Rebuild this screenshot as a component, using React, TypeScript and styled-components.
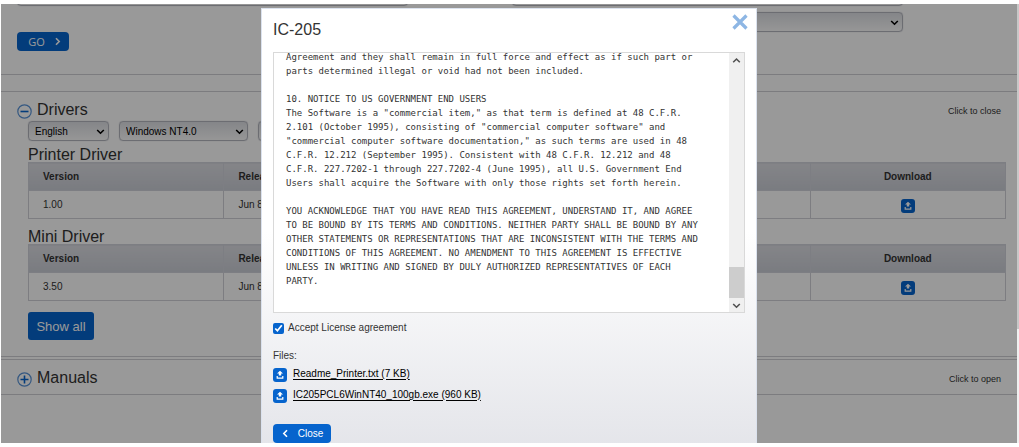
import React from "react";
import styled, { createGlobalStyle } from "styled-components";

const GlobalStyle = createGlobalStyle`
  * { box-sizing: border-box; }
  html { background: #fff; }
  body {
    margin: 0;
    overflow: hidden;
    color: #333;
    font-family: "Liberation Sans", Arial, sans-serif;
    font-size: 10px;
    line-height: 14px;
  }
  h1, h2, h3, p { margin: 0; font-weight: 400; }
  button, select { font-family: inherit; }
`;

const Shell = styled.div`
  display: flex;
  height: 100vh;
  padding: 4px 0 4px 1px;
  background: #fff;
`;

const Viewport = styled.main`
  position: relative;
  flex: 1;
  min-width: 0;
  overflow: hidden;
`;

const PageTrack = styled.div`
  width: 2px;
  background: #f0f0f0;
`;

const PageThumb = styled.div`
  width: 2px;
  height: 74%;
  background: #c8c8c8;
`;

const Backdrop = styled.div`
  position: absolute;
  inset: 0;
  display: flex;
  justify-content: center;
  align-items: flex-start;
  padding-top: 4px;
  background: rgba(0, 0, 0, 0.4);
`;

const SearchForm = styled.form`
  display: grid;
  grid-template-columns: 1fr 1fr;
  column-gap: 6px;
  height: 71px;
  margin: 0;
  padding: 0 16px;
  border-bottom: 1px solid #cfcfd4;
`;

const SearchColumn = styled.div`
  display: flex;
  flex-direction: column;
  align-items: flex-start;
  gap: 6px;
  margin-top: -18px;
`;

const SelectFrame = styled.span<{ $width?: string }>`
  display: inline-grid;
  align-items: center;
  width: ${(p) => p.$width ?? "auto"};
  > * { grid-area: 1 / 1; }
  > svg { justify-self: end; margin-right: 4px; pointer-events: none; }
`;

const SelectBox = styled.select`
  width: 100%;
  height: 20px;
  padding: 0 6px;
  appearance: none;
  border: 1px solid #b4b6bf;
  border-radius: 4px;
  background: linear-gradient(#dddfe4, #fbfbfb);
  box-shadow: 0 0 1px #b4b6bf;
  color: #000;
  font-size: 10px;
`;

const ActionButton = styled.button`
  display: inline-flex;
  align-items: center;
  justify-content: center;
  gap: 8px;
  width: 58px;
  height: 19px;
  padding: 0;
  border: 0;
  border-radius: 4px;
  background: #0664cd;
  color: #fff;
  font-size: 10px;
`;

const GoButton = styled(ActionButton)`
  width: 52px;
  margin-top: 20px;
  padding-left: 4px;
  font-family: "Open Sans", sans-serif;
  font-size: 11px;
`;

const Section = styled.section<{ $gap: number; $bottom: number }>`
  margin-top: ${(p) => p.$gap}px;
  padding: 6px 11px ${(p) => p.$bottom}px 16px;
  border-top: 1px solid #cfcfd4;
  border-bottom: 1px solid #cfcfd4;
`;

const SectionHead = styled.div`
  display: flex;
  align-items: center;
  height: 23px;
  padding-right: 5px;
  > svg { margin-top: 3px; }
`;

const SectionTitle = styled.h2`
  flex: 1;
  margin-left: 5px;
  font-size: 16px;
  line-height: 20px;
`;

const Toggle = styled.button`
  padding: 2px 0 0;
  border: 0;
  background: none;
  color: #333;
  font-size: 9px;
`;

const Body = styled.div`
  padding-left: 11px;
`;

const Filters = styled.div`
  display: flex;
  gap: 10px;
  margin-bottom: 7px;
`;

const GroupTitle = styled.h3`
  font-size: 16px;
  line-height: 14px;
`;

const DriverTable = styled.table`
  width: 100%;
  margin-bottom: 11px;
  table-layout: fixed;
  border-collapse: collapse;
`;

const HeadCell = styled.th<{ $center?: boolean }>`
  height: 28px;
  padding: 0 14px;
  border: 1px solid #d0d2da;
  background: linear-gradient(#dddee4, #cbced6);
  text-align: ${(p) => (p.$center ? "center" : "left")};
`;

const Cell = styled.td<{ $center?: boolean }>`
  height: 28px;
  padding: 0 14px;
  border: 1px solid #d0d0d8;
  text-align: ${(p) => (p.$center ? "center" : "left")};
  svg { vertical-align: middle; margin-top: 3px; }
`;

const IconButton = styled.button`
  padding: 0;
  border: 0;
  background: none;
  line-height: 0;
`;

const ShowAll = styled.button`
  display: block;
  width: 66px;
  height: 28px;
  padding: 0;
  border: 0;
  border-radius: 3px;
  background: #0664cd;
  color: #fff;
  font-size: 13px;
`;

const Dialog = styled.div`
  display: flex;
  flex-direction: column;
  width: 496px;
  max-width: 100%;
  padding: 11px 11px 12px;
  border: 1px solid #dbe2ee;
  background: linear-gradient(#fff 50%, #e3e4e9);
`;

const DialogHead = styled.div`
  display: flex;
  justify-content: space-between;
  margin-bottom: 12px;
`;

const DialogTitle = styled.h1`
  font-size: 16px;
  line-height: 20px;
`;

const Dismiss = styled(IconButton)`
  height: 16px;
  margin: -6px -3px 0 0;
`;

const LicenseBox = styled.div`
  display: flex;
  height: 261px;
  border: 1px solid #d9d9d9;
  background: #fff;
  overflow: hidden;
`;

const LicenseText = styled.pre`
  flex: 1;
  margin: -3px 0 0 12px;
  font-family: "DejaVu Sans Mono", monospace;
  font-size: 9px;
  line-height: 14px;
`;

const ScrollBar = styled.div`
  display: flex;
  flex-direction: column;
  align-items: center;
  width: 15px;
  background: #f0f0f0;
`;

const ScrollArrow = styled(IconButton)`
  height: 14px;
`;

const ScrollThumb = styled.div`
  width: 15px;
  height: 31px;
  margin-top: auto;
  background: #cdcdcd;
`;

const Accept = styled.label`
  display: flex;
  align-items: center;
  gap: 4px;
  margin-top: 8px;
`;

const Tick = styled.input`
  width: 11px;
  height: 11px;
  margin: 0;
  accent-color: #0664cd;
`;

const FilesLabel = styled.p`
  margin-top: 14px;
`;

const FileList = styled.ul`
  margin: 0;
  padding: 0;
  list-style: none;
`;

const FileItem = styled.li`
  display: flex;
  align-items: center;
  gap: 6px;
  height: 21px;
  > svg { margin-top: 2px; }
`;

const FileLink = styled.a`
  color: #000;
  text-decoration: underline;
  text-underline-offset: 2px;
`;

const CloseButton = styled(ActionButton)`
  margin-top: 19px;
`;

const DownloadIcon = () => (
  <svg width="14" height="14" viewBox="0 0 14 14" aria-hidden="true">
    <rect width="14" height="14" rx="3" fill="#0664cd" />
    <path d="M7 2.700 10 5.600H8.200V7.600H5.800V5.600H4z" fill="#fff" />
    <path d="M4.200 8v2.200h5.600V8" fill="none" stroke="#fff" strokeWidth="1.200" />
  </svg>
);

const ToggleIcon = ({ open }: { open?: boolean }) => (
  <svg width="15" height="15" viewBox="0 0 15 15" fill="none" aria-hidden="true">
    <circle cx="7.500" cy="7.500" r="6.700" stroke="#5893d8" strokeWidth="1.200" />
    <path d={open ? "M3.500 7.500h8" : "M3.500 7.500h8M7.500 3.500v8"} stroke="#0664cd" strokeWidth="1.600" />
  </svg>
);

const Chevron = ({ d, color = "currentColor" }: { d: string; color?: string }) => (
  <svg width="9" height="9" viewBox="0 0 9 9" fill="none" stroke={color} strokeWidth="1.600" aria-hidden="true">
    <path d={d} />
  </svg>
);

const DOWN = "M1.200 3 4.500 6.200 7.800 3";
const UP = "M1.200 6.200 4.500 3 7.800 6.200";

const Select = ({ label, value, width }: { label: string; value?: string; width?: string }) => (
  <SelectFrame $width={width}>
    <SelectBox aria-label={label}>
      <option>{value}</option>
    </SelectBox>
    <Chevron d={DOWN} color="#000" />
  </SelectFrame>
);

const license = `Agreement and they shall remain in full force and effect as if such part or
parts determined illegal or void had not been included.

10. NOTICE TO US GOVERNMENT END USERS
The Software is a "commercial item," as that term is defined at 48 C.F.R.
2.101 (October 1995), consisting of "commercial computer software" and
"commercial computer software documentation," as such terms are used in 48
C.F.R. 12.212 (September 1995). Consistent with 48 C.F.R. 12.212 and 48
C.F.R. 227.7202-1 through 227.7202-4 (June 1995), all U.S. Government End
Users shall acquire the Software with only those rights set forth herein.

YOU ACKNOWLEDGE THAT YOU HAVE READ THIS AGREEMENT, UNDERSTAND IT, AND AGREE
TO BE BOUND BY ITS TERMS AND CONDITIONS. NEITHER PARTY SHALL BE BOUND BY ANY
OTHER STATEMENTS OR REPRESENTATIONS THAT ARE INCONSISTENT WITH THE TERMS AND
CONDITIONS OF THIS AGREEMENT. NO AMENDMENT TO THIS AGREEMENT IS EFFECTIVE
UNLESS IN WRITING AND SIGNED BY DULY AUTHORIZED REPRESENTATIVES OF EACH
PARTY.`;

const drivers = [
  { name: "Printer Driver", version: "1.00", released: "Jun 8" },
  { name: "Mini Driver", version: "3.50", released: "Jun 8" },
];

const files = ["Readme_Printer.txt (7 KB)", "IC205PCL6WinNT40_100gb.exe (960 KB)"];

export default function App() {
  return (
    <Shell>
      <GlobalStyle />
      <Viewport>
        <SearchForm onSubmit={(e) => e.preventDefault()}>
          <SearchColumn>
            <Select label="Category" width="80%" />
            <GoButton type="submit">
              GO <Chevron d="M3 1.200 6.200 4.500 3 7.800" />
            </GoButton>
          </SearchColumn>
          <SearchColumn>
            <Select label="Series" width="80%" />
            <Select label="Model" width="80%" />
          </SearchColumn>
        </SearchForm>

        <Section $gap={16} $bottom={16}>
          <SectionHead>
            <ToggleIcon open />
            <SectionTitle>Drivers</SectionTitle>
            <Toggle>Click to close</Toggle>
          </SectionHead>
          <Body>
            <Filters>
              <Select label="Language" value="English" width="81px" />
              <Select label="Operating system" value="Windows NT4.0" width="129px" />
              <Select label="Type" width="129px" />
            </Filters>
            {drivers.map((d) => (
              <React.Fragment key={d.name}>
                <GroupTitle>{d.name}</GroupTitle>
                <DriverTable>
                  <thead>
                    <tr>
                      <HeadCell>Version</HeadCell>
                      <HeadCell>Release</HeadCell>
                      <HeadCell />
                      <HeadCell />
                      <HeadCell $center>Download</HeadCell>
                    </tr>
                  </thead>
                  <tbody>
                    <tr>
                      <Cell>{d.version}</Cell>
                      <Cell>{d.released}</Cell>
                      <Cell />
                      <Cell />
                      <Cell $center>
                        <IconButton aria-label={`Download ${d.name}`}>
                          <DownloadIcon />
                        </IconButton>
                      </Cell>
                    </tr>
                  </tbody>
                </DriverTable>
              </React.Fragment>
            ))}
            <ShowAll>Show all</ShowAll>
          </Body>
        </Section>

        <Section $gap={2} $bottom={5}>
          <SectionHead>
            <ToggleIcon />
            <SectionTitle>Manuals</SectionTitle>
            <Toggle>Click to open</Toggle>
          </SectionHead>
        </Section>

        <Backdrop>
          <Dialog role="dialog" aria-labelledby="dialog-title">
            <DialogHead>
              <DialogTitle id="dialog-title">IC-205</DialogTitle>
              <Dismiss aria-label="Dismiss">
                <svg width="16" height="16" viewBox="0 0 16 16" stroke="#8db6e4" strokeWidth="3.200">
                  <path d="M1.500 1.500l13 13M14.500 1.500l-13 13" />
                </svg>
              </Dismiss>
            </DialogHead>
            <LicenseBox>
              <LicenseText>{license}</LicenseText>
              <ScrollBar>
                <ScrollArrow aria-label="Scroll up">
                  <Chevron d={UP} color="#505050" />
                </ScrollArrow>
                <ScrollThumb />
                <ScrollArrow aria-label="Scroll down">
                  <Chevron d={DOWN} color="#505050" />
                </ScrollArrow>
              </ScrollBar>
            </LicenseBox>
            <Accept>
              <Tick type="checkbox" defaultChecked />
              Accept License agreement
            </Accept>
            <FilesLabel>Files:</FilesLabel>
            <FileList>
              {files.map((f) => (
                <FileItem key={f}>
                  <DownloadIcon />
                  <FileLink href="#">{f}</FileLink>
                </FileItem>
              ))}
            </FileList>
            <CloseButton>
              <Chevron d="M6 1.200 2.800 4.500 6 7.800" /> Close
            </CloseButton>
          </Dialog>
        </Backdrop>
      </Viewport>
      <PageTrack>
        <PageThumb />
      </PageTrack>
    </Shell>
  );
}
